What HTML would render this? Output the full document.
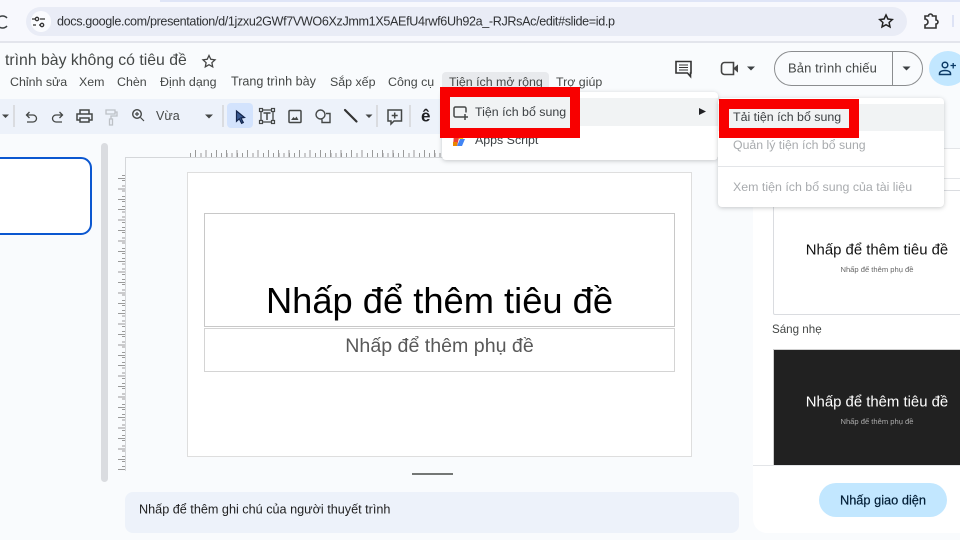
<!DOCTYPE html>
<html lang="vi"><head><meta charset="utf-8"><title>Google Slides</title>
<style>
html,body{margin:0;padding:0}
body{width:960px;height:540px;overflow:hidden;position:relative;background:#f9fbfd;font-family:"Liberation Sans","Noto Sans CJK SC",sans-serif;color:#3c4043}
div,span.a{position:absolute;box-sizing:border-box}
.t{white-space:nowrap;line-height:1;transform:translateY(-50%)}
.m{font-size:12.4px;top:82px;color:#444746}
.c{text-align:center;left:0;right:0}
svg{position:absolute;left:0;top:0}
</style></head><body>

<div style="left:0;top:0;width:960px;height:42px;background:#f7f8fd"></div>
<div style="left:160px;top:0;width:800px;height:2px;background:#dfe5f7"></div>
<div style="left:26px;top:7px;width:881px;height:29px;background:#e9ecf6;border-radius:15px"></div>
<div style="left:31px;top:11px;width:20px;height:21px;background:#fafbfe;border-radius:11px"></div>
<div class="t" style="left:57px;top:22px;font-size:12.6px;color:#2f3134;letter-spacing:-.36px">docs.google.com/presentation/d/1jzxu2GWf7VWO6XzJmm1X5AEfU4rwf6Uh92a_-RJRsAc/edit#slide=id.p</div>
<div style="left:0;top:41px;width:960px;height:2px;background:#e3e5ec"></div>

<div class="t" style="left:5px;top:61px;font-size:15.8px;color:#444746">trình bày không có tiêu đề</div>
<div class="t m" style="left:10px">Chỉnh sửa</div>
<div class="t m" style="left:79px">Xem</div>
<div class="t m" style="left:117px">Chèn</div>
<div class="t m" style="left:160px">Định dạng</div>
<div class="t m" style="left:231px;font-size:12.6px">Trang trình bày</div>
<div class="t m" style="left:330px">Sắp xếp</div>
<div class="t m" style="left:388px">Công cụ</div>
<div style="left:442px;top:72px;width:107px;height:20px;background:#e8eaed;border-radius:4px 4px 0 0"></div>
<div class="t m" style="left:449px">Tiện ích mở rộng</div>
<div class="t m" style="left:556px">Trợ giúp</div>

<div style="left:774px;top:51px;width:149px;height:35px;border:1px solid #8b8d8f;border-radius:18px"></div>
<div style="left:892px;top:51px;width:1px;height:35px;background:#8b8d8f"></div>
<div class="t" style="left:788px;top:68px;font-size:13px;color:#444746;letter-spacing:.1px">Bản trình chiếu</div>
<div style="left:929px;top:51px;width:38px;height:35px;background:#c2e7ff;border-radius:50%"></div>

<!-- toolbar -->
<div style="left:0;top:99px;width:920px;height:35px;background:#edf2fa;border-radius:0 18px 18px 0"></div>
<div style="left:227px;top:103px;width:26px;height:25px;background:#d3e3fd;border-radius:4px"></div>
<div class="t" style="left:156px;top:116px;font-size:12.5px;color:#444746">Vừa</div>
<div class="t" style="left:421px;top:116px;font-size:17px;font-weight:bold;color:#202124">ê</div>

<!-- panel -->
<div style="left:753px;top:148px;width:207px;height:385px;background:#fff;border-radius:0 0 0 14px;border-top:1px solid #e3e5e8"></div>
<div style="left:753px;top:178px;width:207px;height:1px;background:#e3e5e8"></div>
<div style="left:753px;top:465px;width:207px;height:1px;background:#e3e5e8"></div>
<div style="left:773px;top:190px;width:200px;height:125px;background:#fff;border:1px solid #dadce0;border-radius:2px"></div>
<div class="t" style="left:773px;width:208px;top:251px;font-size:14.9px;color:#111;text-align:center;padding-right:0">Nhấp để thêm tiêu đề</div>
<div class="t" style="left:773px;width:208px;top:270px;font-size:7.6px;color:#666;text-align:center">Nhấp để thêm phụ đề</div>
<div class="t" style="left:772px;top:330px;font-size:11.6px;color:#444746">Sáng nhẹ</div>
<div style="left:773px;top:349px;width:200px;height:116px;background:#212121;border:1px solid #cfcfcf;border-bottom:0"></div>
<div class="t" style="left:773px;width:208px;top:403px;font-size:14.9px;color:#fff;text-align:center">Nhấp để thêm tiêu đề</div>
<div class="t" style="left:773px;width:208px;top:422px;font-size:7.6px;color:#aaa;text-align:center">Nhấp để thêm phụ đề</div>
<div style="left:819px;top:483px;width:128px;height:34px;background:#c2e7ff;border-radius:17px"></div>
<div class="t" style="left:819px;width:128px;top:501px;font-size:12.8px;color:#001d35;text-align:center;-webkit-text-stroke:.2px #001d35">Nhấp giao diện</div>

<!-- filmstrip -->
<div style="left:-14px;top:157px;width:106px;height:78px;background:#fff;border:2px solid #0b57d0;border-radius:11px"></div>
<div style="left:101px;top:143px;width:7px;height:339px;background:#dadce0;border-radius:4px"></div>

<!-- rulers -->
<div style="left:125px;top:157px;width:628px;height:1px;background:#d5d7da"></div>
<div style="left:125px;top:157px;width:1px;height:314px;background:#d5d7da"></div>
<div style="left:190px;top:153px;width:300px;height:4px;background:repeating-linear-gradient(90deg,#9a9a9a 0 1px,transparent 1px 5.2px)"></div>
<div style="left:195px;top:150px;width:300px;height:7px;background:repeating-linear-gradient(90deg,#9a9a9a 0 1px,transparent 1px 10.4px)"></div>
<div style="left:122px;top:175px;width:3px;height:295px;background:repeating-linear-gradient(180deg,#9a9a9a 0 1px,transparent 1px 5.2px)"></div>
<div style="left:118px;top:178px;width:7px;height:292px;background:repeating-linear-gradient(180deg,#9a9a9a 0 1px,transparent 1px 10.4px)"></div>

<!-- slide -->
<div style="left:187px;top:172px;width:505px;height:285px;background:#fff;border:1px solid #dedede"></div>
<div style="left:204px;top:213px;width:471px;height:114px;border:1px solid #c8c8c8"></div>
<div style="left:204px;top:328px;width:471px;height:44px;border:1px solid #d4d4d4"></div>
<div class="t" style="left:204px;width:471px;top:301px;font-size:36.3px;color:#000;text-align:center">Nhấp để thêm tiêu đề</div>
<div class="t" style="left:204px;width:471px;top:347px;font-size:19.6px;color:#595959;text-align:center">Nhấp để thêm phụ đề</div>

<div style="left:412px;top:473px;width:41px;height:2px;background:#747775"></div>
<div style="left:125px;top:492px;width:614px;height:41px;background:#edf2fa;border-radius:8px"></div>
<div class="t" style="left:139px;top:510px;font-size:12.65px;color:#1f1f1f">Nhấp để thêm ghi chú của người thuyết trình</div>

<!-- icons under menus -->
<svg width="960" height="540" viewBox="0 0 960 540" fill="none" stroke="#444746" stroke-width="1.5">
  <path d="M7 18a6 6 0 1 0 0 8" stroke="#3c4043"/>
  <g stroke="#333" stroke-width="1.3"><circle cx="37" cy="19" r="1.7"/><path d="M35 19h-3M36 25h-3"/><circle cx="42" cy="25" r="1.7"/><path d="M40 19h5M39 25h1"/></g>
  <path d="M886 15l1.900 4 4.400.5-3.200 3 .9 4.400-4-2.200-4 2.200.9-4.400-3.200-3 4.400-.5z" stroke="#222" stroke-width="1.500"/>
  <path d="M925 16h3.500a2 2 0 0 1 4 0h3.500v4a2 2 0 0 1 0 4v4h-11v-3a2 2 0 0 0 0-6z" stroke="#333" stroke-width="1.600"/>
  <path d="M953 15v12" stroke="#d5dcf2" stroke-width="1.500"/>
  <path d="M209 55.500l1.800 3.800 4.200.5-3.100 2.900.8 4.100-3.700-2.100-3.700 2.100.8-4.100-3.100-2.900 4.200-.5z" stroke="#444" stroke-width="1.300"/>

  <path d="M676 61.500h15v11.500h-.5v3.500l-3-3.500h-11.500z" stroke="#333" stroke-width="1.600"/><path d="M679 65h9M679 67.500h9M679 70h9" stroke="#333" stroke-width="1"/>
  <path d="M724.500 62.500h9v12h-9a3 3 0 0 1-3-3v-6a3 3 0 0 1 3-3z" stroke="#444" stroke-width="1.600"/><path d="M734 68.500l3.500-3v6l-3.500-3z" fill="#444" stroke="#444" stroke-width="1"/>
  <path d="M747 66.500h8l-4 4z M902.500 66.500h8l-4 4z" fill="#3c4043" stroke="none"/>
  <circle cx="945" cy="65" r="2.800" stroke="#0b3a66" stroke-width="1.500"/><path d="M939.500 74.500v-1c0-2 2.500-3 5.500-3s5.500 1 5.500 3v1z" stroke="#0b3a66" stroke-width="1.500"/><path d="M950.500 65.500h5.500M953.200 63v5.500" stroke="#0b3a66" stroke-width="1.300"/>

  <path d="M2 114.500h7l-3.500 3.500z M205 114.500h8l-4 4z M365.500 114.500h7l-3.500 3.500z" fill="#444746" stroke="none"/>
  <path d="M14 105v22M223 105v22M377 105v22M410 105v22" stroke="#c7c7c7" stroke-width="1"/>
  <path d="M29.500 112l-3 3 3 3M27 115h6a3.500 3.500 0 0 1 0 7h-6" stroke-width="1.300"/>
  <path d="M59.500 112l3 3-3 3M62 115h-6a3.500 3.500 0 0 0 0 7h6" stroke-width="1.300"/>
  <path d="M80 114v-4h9v4M80 120h-3v-6h15v6h-3M80 118h9v4h-9z" stroke-width="1.500"/>
  <path d="M106 110h9v4h-9zM115 112h2v4h-6v3M109.500 119h3v6h-3z" stroke="#bdc1c6" stroke-width="1.300"/>
  <circle cx="137" cy="114" r="4.300" stroke-width="1.400"/><path d="M140.500 117.500l3.500 3.500M135 114h4M137 112v4" stroke-width="1.200"/>
  <path d="M236.500 111l8 6.500-3.500.5 2.300 4.500-1.700.8-2.300-4.500-2.800 2.500z" fill="#3a5a92" stroke="#14264d" stroke-width="1.200"/>
  <path d="M261 110h12v12h-12z" stroke-width="1.300"/><g fill="#edf2fa" stroke-width="1.200"><rect x="259.500" y="108.500" width="3" height="3"/><rect x="271.500" y="108.500" width="3" height="3"/><rect x="259.500" y="120.500" width="3" height="3"/><rect x="271.500" y="120.500" width="3" height="3"/></g><path d="M263.500 113h7M267 113v7" stroke-width="1.500"/>
  <rect x="289" y="110.500" width="12" height="12" rx="1" stroke-width="1.500"/><path d="M291 120l2.500-3 1.500 1.500 1.500-2 2 3.500z" fill="#444746" stroke="none"/>
  <circle cx="320.500" cy="114.500" r="4.500" stroke-width="1.400"/><path d="M326 113.500h4v9h-8v-3" stroke-width="1.400"/>
  <path d="M345 110l11.500 11.500" stroke="#333" stroke-width="2.200" stroke-linecap="round"/>
  <path d="M388 110h13.500v11h-7.500l-3 3v-3h-3z" stroke-width="1.500"/><path d="M394.700 112.500v6M391.700 115.500h6" stroke-width="1.500"/>
</svg>

<!-- menu 1 -->
<div style="left:442px;top:92px;width:276px;height:68px;background:#fff;border-radius:0 4px 4px 4px;box-shadow:0 1px 4px rgba(60,64,67,.28)"></div>
<div style="left:442px;top:98px;width:276px;height:28px;background:#f1f3f4"></div>
<div class="t" style="left:475px;top:140px;font-size:12.400px;color:#3c4043">Apps Script</div>
<svg width="960" height="540" viewBox="0 0 960 540" fill="none">
  <path d="M454 134h5v4l-2 8h-4z" fill="#ea4335"/><path d="M459 134h6l-2 5h-4z" fill="#fbbc04"/><path d="M457 146l3-7h5l-3 7z" fill="#4285f4"/><path d="M453 142h4v4h-4z" fill="#ea8600"/>
  <path d="M699 108l7 3.500-7 3.500z" fill="#202124"/>
</svg>

<!-- menu 2 -->
<div style="left:718px;top:98px;width:226px;height:109px;background:#fff;border-radius:4px;box-shadow:0 1px 4px rgba(60,64,67,.28)"></div>
<div style="left:718px;top:104px;width:226px;height:27px;background:#f1f3f4"></div>
<div class="t" style="left:733px;top:145px;font-size:12.300px;color:#a8abae">Quản lý tiện ích bổ sung</div>
<div style="left:718px;top:166px;width:226px;height:1px;background:#e3e5e8"></div>
<div class="t" style="left:733px;top:187px;font-size:12.400px;color:#a8abae">Xem tiện ích bổ sung của tài liệu</div>

<!-- red highlights -->
<div style="left:440px;top:87px;width:140px;height:51px;border:10px solid #f80000;background:#f1f3f4"></div>
<div style="left:719px;top:99px;width:140px;height:39px;border:10px solid #f80000;background:#f1f3f4"></div>
<div class="t" style="left:475px;top:112px;font-size:12.400px;color:#3c4043">Tiện ích bổ sung</div>
<div class="t" style="left:733px;top:117px;font-size:12.400px;color:#3c4043">Tải tiện ích bổ sung</div>
<svg width="960" height="540" viewBox="0 0 960 540" fill="none" stroke="#444746" stroke-width="1.500">
  <path d="M462 117h-6.500a1.500 1.500 0 0 1-1.500-1.500v-7a1.500 1.500 0 0 1 1.500-1.500h9a1.500 1.500 0 0 1 1.500 1.500v4"/><path d="M465 114v6M462 117h6"/>
</svg>
</body></html>
